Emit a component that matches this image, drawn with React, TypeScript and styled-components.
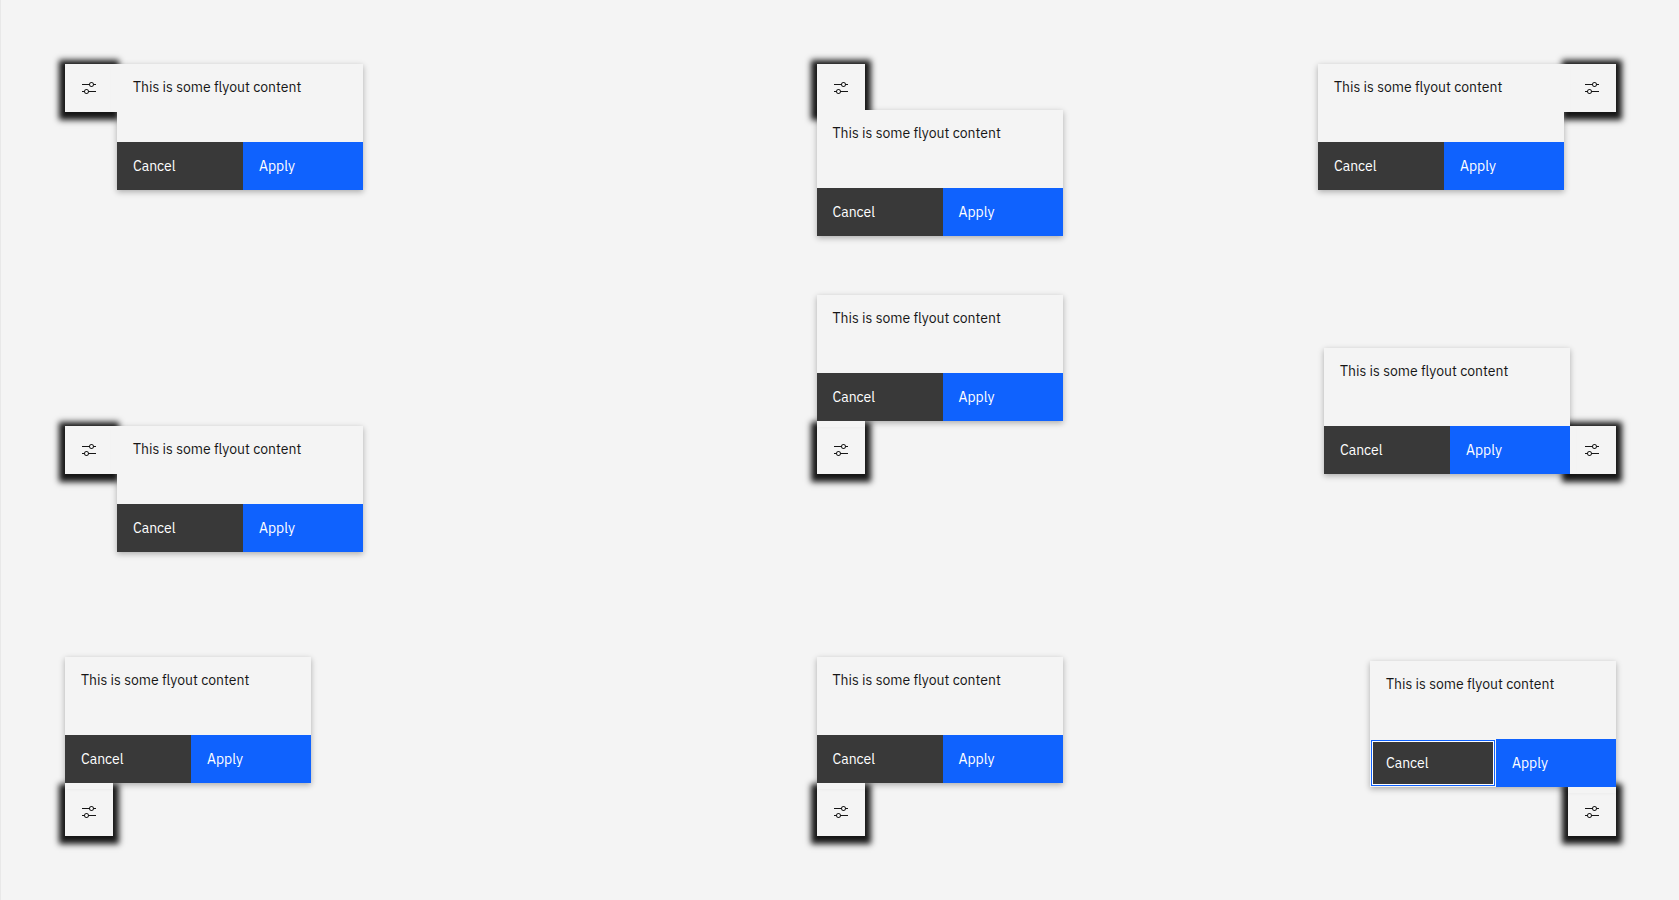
import React from "react";
import styled, { createGlobalStyle, css } from "styled-components";

type Placement = "right" | "below" | "left" | "above" | "leftEnd" | "aboveEnd";

const GlobalStyle = createGlobalStyle`
  * { box-sizing: border-box; }
  body {
    margin: 0;
    background: #f4f4f4;
    color: #161616;
    font: 14px/18px "IBM Plex Sans", "Open Sans", sans-serif;
  }
`;

const Stage = styled.main`
  min-height: 100vh;
  padding: 64px 63px 64px 64px;
  border-left: 1px solid #e8e8e8;
  display: grid;
  grid-template-columns: repeat(3, 48px);
  grid-auto-rows: 48px;
  justify-content: space-between;
  align-content: space-between;
  overflow: hidden;
`;

const Anchor = styled.div`
  position: relative;
`;

const Trigger = styled.button`
  width: 100%;
  height: 100%;
  padding: 0;
  border: 0;
  display: flex;
  align-items: center;
  justify-content: center;
  background: #f4f4f4;
  color: #161616;
  box-shadow: 0 2px 6px 6px #161616;
  cursor: pointer;
`;

/* The ::before of each placement bridges the gap between panel and trigger. */
const placements = {
  right: css`
    top: 0;
    left: 52px;
    &::before { top: 0; right: 100%; width: 6px; height: 48px; }
  `,
  below: css`
    top: 46px;
    left: 0;
    &::before { bottom: 100%; left: 0; width: 48px; height: 6px; }
  `,
  left: css`
    top: 0;
    right: 52px;
    &::before { top: 0; left: 100%; width: 6px; height: 48px; }
  `,
  above: css`
    bottom: 53px;
    left: 0;
    &::before { top: 100%; left: 0; width: 48px; height: 6px; }
  `,
  leftEnd: css`
    bottom: 0;
    right: 46px;
    &::before { bottom: 0; left: 100%; width: 6px; height: 48px; }
  `,
  aboveEnd: css`
    bottom: 49px;
    right: 0;
    &::before { top: 100%; right: 0; width: 48px; height: 6px; }
  `,
};

const Panel = styled.div<{ $placement: Placement }>`
  position: absolute;
  width: 246px;
  background: #f4f4f4;
  box-shadow: 0 2px 6px rgba(0, 0, 0, 0.3);

  &::before {
    content: "";
    position: absolute;
    background: #f4f4f4;
  }

  ${({ $placement }) => placements[$placement]}
`;

const Content = styled.div`
  min-height: 78px;
  padding: 16px;
  line-height: 14px;
  white-space: nowrap;
`;

const Actions = styled.div`
  display: grid;
  grid-template-columns: 126px 1fr;
`;

const Action = styled.button<{ $primary?: boolean; $ring?: boolean }>`
  height: 48px;
  padding: 0 16px;
  border: 0;
  background: ${({ $primary }) => ($primary ? "#0f62fe" : "#393939")};
  color: #fff;
  font: inherit;
  text-align: left;
  cursor: pointer;
  ${({ $ring }) =>
    $ring &&
    css`
      box-shadow: inset 0 0 0 1px #f4f4f4, inset 0 0 0 2px #0f62fe, inset 0 0 0 3px #fff;
    `}
`;

const AdjustIcon = () => (
  <svg width="16" height="16" viewBox="0 0 32 32" fill="currentColor" aria-hidden="true">
    <path d="M30 8h-4.1c-.5-2.3-2.5-4-4.9-4s-4.4 1.7-4.9 4H2v2h14.1c.5 2.3 2.5 4 4.9 4s4.4-1.7 4.9-4H30V8zm-9 4c-1.7 0-3-1.3-3-3s1.3-3 3-3 3 1.3 3 3-1.3 3-3 3zM2 24h4.1c.5 2.3 2.5 4 4.9 4s4.4-1.7 4.9-4H30v-2H15.9c-.5-2.3-2.5-4-4.9-4s-4.4 1.7-4.9 4H2v2zm9-4c1.7 0 3 1.3 3 3s-1.3 3-3 3-3-1.3-3-3 1.3-3 3-3z" />
  </svg>
);

const flyouts: { placement: Placement; focused?: boolean }[] = [
  { placement: "right" },
  { placement: "below" },
  { placement: "left" },
  { placement: "right" },
  { placement: "above" },
  { placement: "leftEnd" },
  { placement: "above" },
  { placement: "above" },
  { placement: "aboveEnd", focused: true },
];

const Flyout = ({ placement, focused }: { placement: Placement; focused?: boolean }) => (
  <Anchor>
    <Trigger type="button" aria-label="Open settings" aria-expanded="true">
      <AdjustIcon />
    </Trigger>
    <Panel $placement={placement}>
      <Content>This is some flyout content</Content>
      <Actions>
        <Action type="button" $ring={focused}>Cancel</Action>
        <Action type="button" $primary>Apply</Action>
      </Actions>
    </Panel>
  </Anchor>
);

export default function App() {
  return (
    <>
      <GlobalStyle />
      <Stage>
        {flyouts.map((flyout, index) => (
          <Flyout key={index} {...flyout} />
        ))}
      </Stage>
    </>
  );
}
